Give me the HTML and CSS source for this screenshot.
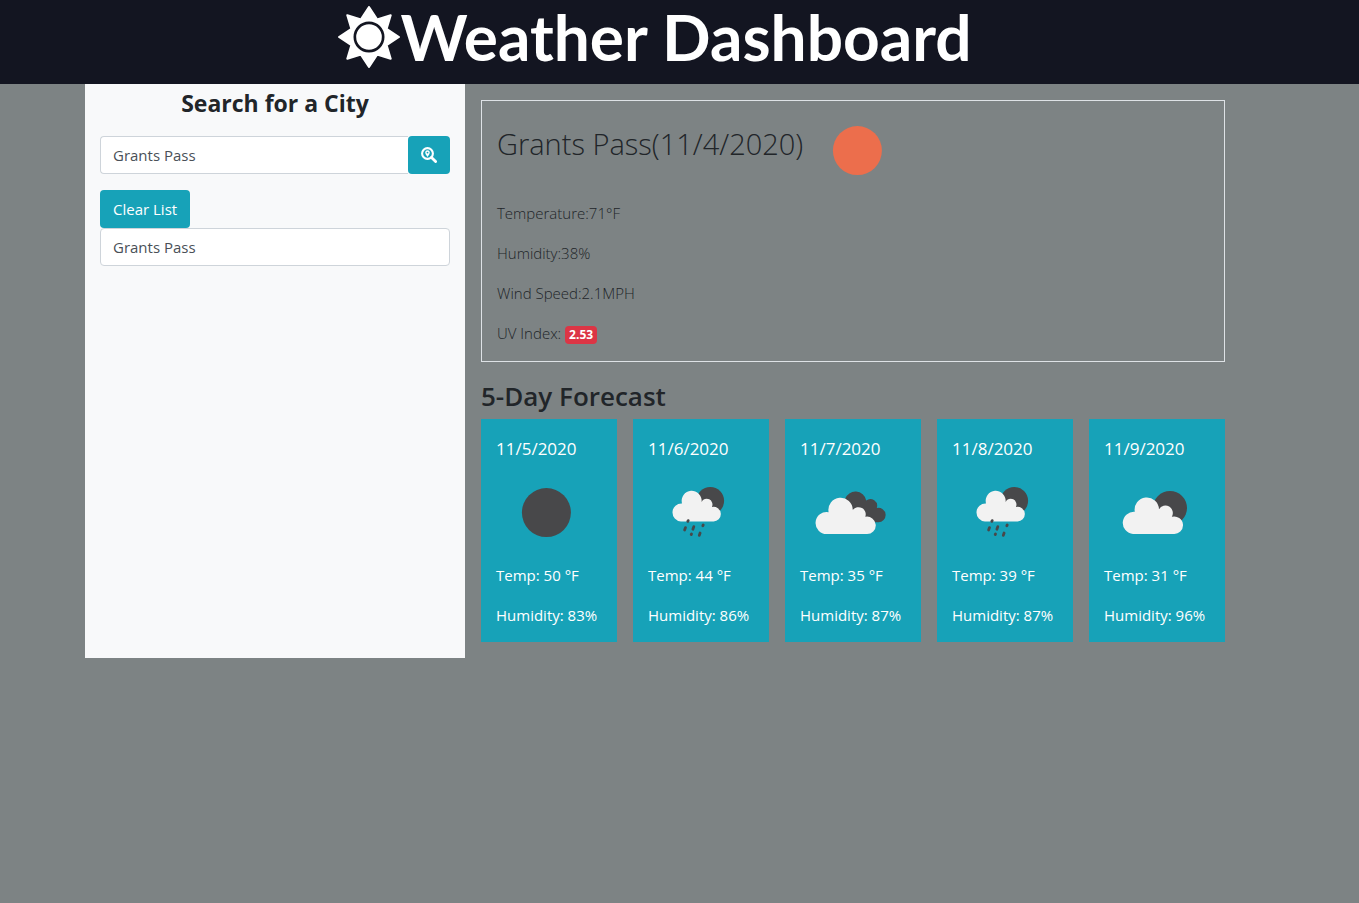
FILE: index.html
```
<!DOCTYPE html>
<html lang="en">
<head>
<meta charset="utf-8">
<meta name="viewport" content="width=device-width, initial-scale=1">
<title>Weather Dashboard</title>
<link rel="stylesheet" href="styles.css">
</head>
<body>
<svg class="defs" aria-hidden="true">
  <symbol id="clear" viewBox="0 0 100 100"><circle cx="50.4" cy="49.6" r="24.5"/></symbol>
  <symbol id="rain" viewBox="0 0 100 100">
    <circle cx="62.3" cy="37.8" r="13.8" fill="#48484a"/>
    <path class="cloud" d="M33 58.4A9 9 0 1 1 34 40.4A10 10 0 1 1 53.6 39A5.7 5.7 0 0 1 63.9 44A7.3 7.3 0 1 1 65 58.4Z"/>
    <g stroke="#48484a" stroke-width="2.8" stroke-linecap="round"><path d="M40.2 57.6L39.8 58.4M37.5 64.6L36.6 67M45.8 63.6L44.9 66.2M55.2 62L54.8 62.8M43.5 71L43.2 71.6M52.1 70L51.3 72.4"/></g>
  </symbol>
  <symbol id="broken" viewBox="0 0 100 100">
    <path fill="#48484a" d="M45 36A11 11 0 0 1 66.2 37.5A6.8 6.8 0 0 1 76.8 45A7.2 7.2 0 1 1 78 59.2H55Z"/>
    <path class="cloud" d="M27 71A11 11 0 1 1 28.6 49.2A12.2 12.2 0 1 1 52.8 47A7.2 7.2 0 0 1 65.3 53.8A8.7 8.7 0 1 1 66.5 71Z"/>
  </symbol>
  <symbol id="few" viewBox="0 0 100 100">
    <circle cx="66" cy="45" r="17" fill="#48484a"/>
    <path class="cloud" d="M29 71A11 11 0 1 1 30.8 48.8A12.2 12.2 0 1 1 55 46.2A7.2 7.2 0 0 1 67.8 53.8A8.8 8.8 0 1 1 69.2 71Z"/>
  </symbol>
</svg>

<header class="site-header">
  <h1 class="site-title">
    <svg class="logo" viewBox="0 0 60 60" aria-hidden="true">
      <path d="M30 1L37.8 13L51 9L47 22.2L59 30L47 37.8L51 51L37.8 47L30 59L22.2 47L9 51L13 37.8L1 30L13 22.2L9 9L22.2 13Z" fill="#fff" stroke="#fff" stroke-width="2" stroke-linejoin="round"/>
      <circle cx="30" cy="30" r="13.7" fill="#fff" stroke="#131521" stroke-width="2.6"/>
    </svg>Weather Dashboard
  </h1>
</header>

<main class="container">
  <aside class="sidebar">
    <h2 class="sidebar-title"><label for="city">Search for a City</label></h2>
    <form class="search">
      <input class="field search-field" id="city" type="text" value="Grants Pass">
      <button class="btn btn-search" type="button" aria-label="Search">
        <svg viewBox="0 0 16 16" width="16" height="16" aria-hidden="true">
          <circle cx="6.5" cy="6.5" r="5.4" fill="none" stroke="#fff" stroke-width="2.1"/>
          <path d="M10.5 10.5L14.6 14.6" stroke="#fff" stroke-width="2.8" stroke-linecap="round"/>
          <path d="M6.5 10C5.4 8.4 4.2 7 4.2 5.6A2.3 2.3 0 0 1 8.8 5.6C8.8 7 7.6 8.4 6.5 10Z" fill="#fff"/>
          <circle cx="6.5" cy="5.6" r=".9" fill="#17a2b8"/>
        </svg>
      </button>
    </form>
    <button class="btn" type="button">Clear List</button>
    <ul class="history"><li class="field">Grants Pass</li></ul>
  </aside>

  <div class="content">
    <section class="current">
      <div class="current-head">
        <h3 class="current-title">Grants Pass(11/4/2020)</h3>
        <svg class="weather sun"><use href="#clear"/></svg>
      </div>
      <p>Temperature:71°F</p>
      <p>Humidity:38%</p>
      <p>Wind Speed:2.1MPH</p>
      <p>UV Index: <span class="badge">2.53</span></p>
    </section>

    <h2 class="forecast-title">5-Day Forecast</h2>
    <section class="forecast">
      <article class="card"><h3 class="date">11/5/2020</h3><svg class="weather"><use href="#clear"/></svg><p>Temp: 50 °F</p><p>Humidity: 83%</p></article>
      <article class="card"><h3 class="date">11/6/2020</h3><svg class="weather"><use href="#rain"/></svg><p>Temp: 44 °F</p><p>Humidity: 86%</p></article>
      <article class="card"><h3 class="date">11/7/2020</h3><svg class="weather"><use href="#broken"/></svg><p>Temp: 35 °F</p><p>Humidity: 87%</p></article>
      <article class="card"><h3 class="date">11/8/2020</h3><svg class="weather"><use href="#rain"/></svg><p>Temp: 39 °F</p><p>Humidity: 87%</p></article>
      <article class="card"><h3 class="date">11/9/2020</h3><svg class="weather"><use href="#few"/></svg><p>Temp: 31 °F</p><p>Humidity: 96%</p></article>
    </section>
  </div>
</main>
</body>
</html>
```
FILE: styles.css
```
* { box-sizing: border-box; }
body {
  margin: 0;
  background: #7d8384;
  color: #212529;
  font: 400 15px/24px "Open Sans", "Noto Sans", sans-serif;
}
h1, h2, h3, p, ul { margin: 0; padding: 0; }
ul { list-style: none; }
.defs { display: none; }

.site-header {
  padding: 0 49px 10px 0;
  background: #131521;
}
.site-title {
  display: flex;
  justify-content: center;
  align-items: center;
  color: #fff;
  font: 700 64px/74px Lato, sans-serif;
}
.logo { width: 62px; height: 62px; }

.container {
  display: grid;
  grid-template-columns: 1fr 2fr;
  width: calc(100% - 49px);
  max-width: 1310px;
  padding: 0 85px;
}
.sidebar { padding: 4px 15px; background: #f8f9fa; }
.sidebar-title {
  margin-bottom: 18px;
  text-align: center;
  font-size: 23px;
  font-weight: 700;
  line-height: 30px;
}
.search { display: flex; margin-bottom: 16px; }
.field {
  width: 100%;
  height: 38px;
  padding: 6px 12px;
  border: 1px solid #ced4da;
  border-radius: 4px;
  background: #fff;
  color: #495057;
  font: inherit;
}
.search-field { flex: 1; min-width: 0; border-right: 0; border-radius: 4px 0 0 4px; }
.btn {
  height: 38px;
  padding: 0 13px;
  border: 0;
  border-radius: 4px;
  background: #17a2b8;
  color: #fff;
  font: inherit;
}
.btn svg { display: block; }
.btn, .history { display: block; }

.content { min-width: 0; padding: 16px 0 16px 16px; }
.current {
  padding: 0 15px 16px;
  border: 1px solid #dee2e6;
  font-weight: 300;
}
.current-head { display: flex; gap: 4px; }
.current-title { padding-top: 25px; font-size: 29px; font-weight: 300; line-height: 36px; }
.current p + p, .card p + p { margin-top: 16px; }
.weather { display: block; width: 100px; height: 100px; fill: #48484a; }
.sun { fill: #ec6e4c; }
.cloud { fill: #f2f2f2; }
.badge {
  display: inline-block;
  padding: 0 4px;
  border-radius: 4px;
  background: #dc3545;
  color: #fff;
  font-size: 12px;
  font-weight: 700;
  line-height: 18px;
}
.forecast-title { margin: 16px 0 5px; font-size: 26px; font-weight: 600; line-height: 36px; }
.forecast { display: grid; grid-template-columns: repeat(5, 1fr); gap: 16px; }
.card { padding: 16px 15px 15px; background: #17a2b8; color: #fff; white-space: nowrap; }
.date { font-size: 17px; font-weight: 400; line-height: 28px; }
```
